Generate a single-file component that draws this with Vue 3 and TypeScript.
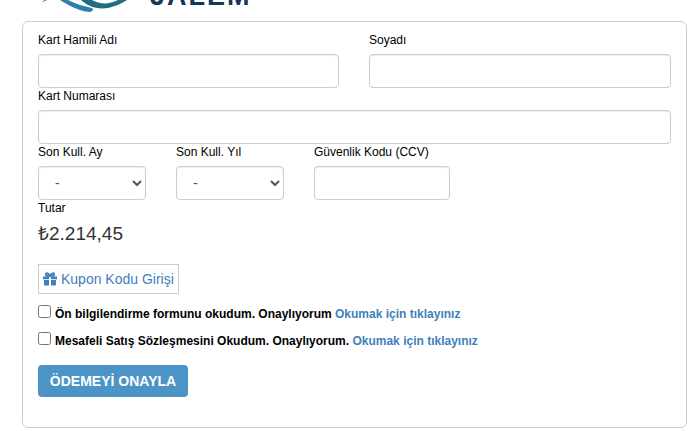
<script setup lang="ts">
const months = ['-']
const years = ['-']
</script>

<template>
  <div class="page">
    <div class="logo">
      <svg class="logo-mark" width="100" height="12" viewBox="0 0 100 12">
        <path d="M6 2.500 L11 0 L8.500 0 Z" fill="#2d7fae" />
        <path d="M24 0 C32 5 42 11 54 12 C58 11 57 9 56 8 C46 6 38 3 32 0 Z" fill="#2d7fae" />
        <path d="M45 0 C50 5 60 10 72 8 C80 6 87 3 91 0 L82 0 C76 3 70 4 64 3 C60 2 58 1 56 0 Z" fill="#1e6e80" />
      </svg>
      <span class="logo-text">JALEM</span>
    </div>
    <form class="card">
      <div class="row">
        <div class="field half">
          <label>Kart Hamili Adı</label>
          <input class="control" type="text" />
        </div>
        <div class="field half">
          <label>Soyadı</label>
          <input class="control" type="text" />
        </div>
      </div>
      <div class="field">
        <label>Kart Numarası</label>
        <input class="control" type="text" />
      </div>
      <div class="row">
        <div class="field small">
          <label>Son Kull. Ay</label>
          <select class="control">
            <option v-for="m in months" :key="m">{{ m }}</option>
          </select>
        </div>
        <div class="field small">
          <label>Son Kull. Yıl</label>
          <select class="control">
            <option v-for="y in years" :key="y">{{ y }}</option>
          </select>
        </div>
        <div class="field ccv">
          <label>Güvenlik Kodu (CCV)</label>
          <input class="control" type="text" />
        </div>
      </div>
      <div class="total">
        <label>Tutar</label>
        <div class="amount">₺2.214,45</div>
      </div>
      <a class="coupon">
        <svg class="gift" width="14" height="14" viewBox="0 0 14 14">
          <path fill="#3f7fba" d="M0 4.500 H6 V7.200 H0 Z M8 4.500 H14 V7.200 H8 Z M1 8 H6 V13.500 H2 A1 1 0 0 1 1 12.500 Z M8 8 H13 V12.500 A1 1 0 0 1 12 13.500 H8 Z" />
          <path fill="none" stroke="#3f7fba" stroke-width="1.900" d="M7 4 C5.500 1.200 4 1 3.400 1.400 C2.600 1.900 2.700 3.300 3.800 3.800 H10.200 C11.300 3.300 11.400 1.900 10.600 1.400 C10 1 8.500 1.200 7 4 Z" />
        </svg>
        Kupon Kodu Girişi
      </a>
      <label class="check first">
        <input type="checkbox" />
        <span>Ön bilgilendirme formunu okudum. Onaylıyorum <a>Okumak için tıklayınız</a></span>
      </label>
      <label class="check">
        <input type="checkbox" />
        <span>Mesafeli Satış Sözleşmesini Okudum. Onaylıyorum. <a>Okumak için tıklayınız</a></span>
      </label>
      <button class="submit" type="button">ÖDEMEYİ ONAYLA</button>
    </form>
  </div>
</template>

<style>
html,
body {
  margin: 0;
  background: #fff;
}
</style>

<style scoped>
.page {
  width: 700px;
  height: 431px;
  overflow: hidden;
  font-family: "Liberation Sans", Arial, sans-serif;
  font-size: 12px;
  color: #000;
  box-sizing: border-box;
  padding: 0 13px 0 22px;
}

.logo {
  height: 21px;
  display: flex;
  align-items: flex-start;
  padding-left: 14px;
  overflow: hidden;
}

.logo-mark {
  display: block;
}

.logo-text {
  margin: -17px 0 0 14px;
  font-size: 27px;
  line-height: 26px;
  font-weight: 700;
  letter-spacing: 2px;
  color: #16365c;
}

.card {
  border: 1px solid #ccc;
  border-radius: 6px;
  height: 407px;
  box-sizing: border-box;
  padding: 10px 15px 0;
}

.row {
  display: flex;
  gap: 30px;
}

.half {
  flex: 1;
}

.half:first-child {
  flex: none;
  width: 301px;
}

.small {
  width: 108px;
}

.ccv {
  width: 136px;
}

label {
  display: block;
  height: 22px;
  line-height: 17px;
  color: #000;
}

.control {
  display: block;
  width: 100%;
  height: 34px;
  box-sizing: border-box;
  background: #fff;
  border: 1px solid #ccc;
  border-radius: 4px;
  box-shadow: inset 0 1px 1px rgba(0, 0, 0, 0.075);
  font-family: inherit;
  font-size: 14px;
  color: #555;
  padding: 6px 12px;
}

.total {
  height: 64px;
}

.total label {
  height: 19px;
}

.amount {
  font-size: 19px;
  line-height: 30px;
  color: #333;
}

.coupon {
  display: inline-flex;
  align-items: center;
  gap: 4px;
  height: 30px;
  box-sizing: border-box;
  padding: 0 4px;
  border: 1px solid #ccc;
  font-size: 14px;
  color: #3f7fba;
}

.check {
  display: flex;
  align-items: flex-start;
  height: 27px;
  line-height: 17px;
  font-weight: 700;
}

.first {
  margin-top: 10px;
}

.check input {
  width: 13px;
  height: 13px;
  margin: 1px 4px 0 0;
}

.check span {
  padding-top: 2px;
}

.check a {
  color: #3f7fba;
}

.submit {
  display: block;
  margin-top: 7px;
  width: 150px;
  height: 32px;
  border: 0;
  border-radius: 4px;
  background: #4d94c6;
  color: #fff;
  font-family: inherit;
  font-size: 14px;
  font-weight: 700;
  padding: 0;
}
</style>
